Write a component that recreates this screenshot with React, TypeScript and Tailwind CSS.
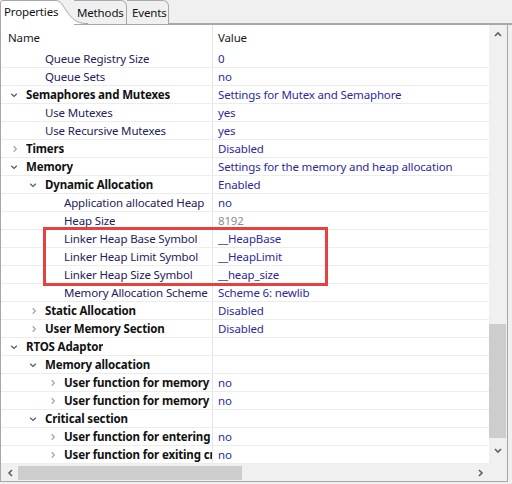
import React from 'react'

type Row = {
  level: number
  kind: 'leaf' | 'open' | 'closed'
  name: string
  value?: string
  muted?: boolean
}

const ROWS: Row[] = [
  { level: 1, kind: 'leaf', name: 'Queue Registry Size', value: '0' },
  { level: 1, kind: 'leaf', name: 'Queue Sets', value: 'no' },
  { level: 0, kind: 'open', name: 'Semaphores and Mutexes', value: 'Settings for Mutex and Semaphore' },
  { level: 1, kind: 'leaf', name: 'Use Mutexes', value: 'yes' },
  { level: 1, kind: 'leaf', name: 'Use Recursive Mutexes', value: 'yes' },
  { level: 0, kind: 'closed', name: 'Timers', value: 'Disabled' },
  { level: 0, kind: 'open', name: 'Memory', value: 'Settings for the memory and heap allocation' },
  { level: 1, kind: 'open', name: 'Dynamic Allocation', value: 'Enabled' },
  { level: 2, kind: 'leaf', name: 'Application allocated Heap', value: 'no' },
  { level: 2, kind: 'leaf', name: 'Heap Size', value: '8192', muted: true },
  { level: 2, kind: 'leaf', name: 'Linker Heap Base Symbol', value: '__HeapBase' },
  { level: 2, kind: 'leaf', name: 'Linker Heap Limit Symbol', value: '__HeapLimit' },
  { level: 2, kind: 'leaf', name: 'Linker Heap Size Symbol', value: '__heap_size' },
  { level: 2, kind: 'leaf', name: 'Memory Allocation Scheme', value: 'Scheme 6: newlib' },
  { level: 1, kind: 'closed', name: 'Static Allocation', value: 'Disabled' },
  { level: 1, kind: 'closed', name: 'User Memory Section', value: 'Disabled' },
  { level: 0, kind: 'open', name: 'RTOS Adaptor' },
  { level: 1, kind: 'open', name: 'Memory allocation' },
  { level: 2, kind: 'closed', name: 'User function for memory allocation', value: 'no' },
  { level: 2, kind: 'closed', name: 'User function for memory deallocation', value: 'no' },
  { level: 1, kind: 'open', name: 'Critical section' },
  { level: 2, kind: 'closed', name: 'User function for entering critical section', value: 'no' },
  { level: 2, kind: 'closed', name: 'User function for exiting critical section', value: 'no' },
]

const INDENT = ['pl-[6px]', 'pl-[25px]', 'pl-[44px]']

function Chevron({ open }: { open: boolean }) {
  return open ? (
    <svg width="8" height="8" viewBox="0 0 8 8" className="ml-[3px]">
      <path d="M1.2 2.8 L4 5.4 L6.8 2.8" fill="none" stroke="#5a5a5a" strokeWidth="1.3" />
    </svg>
  ) : (
    <svg width="8" height="8" viewBox="0 0 8 8" className="ml-[4px]">
      <path d="M2.7 1.2 L5.3 4 L2.7 6.8" fill="none" stroke="#a8a8a8" strokeWidth="1.3" />
    </svg>
  )
}

function TreeRow({ row }: { row: Row }) {
  const bold = row.kind !== 'leaf'
  return (
    <div className="flex h-[18px] border-b border-[#ececec]">
      <div className={`w-[211px] shrink-0 flex items-center overflow-hidden whitespace-nowrap ${INDENT[row.level]}`}>
        {row.kind === 'leaf' ? (
          <span className="w-[19px] shrink-0" />
        ) : (
          <span className="w-[19px] shrink-0 flex items-center">
            <Chevron open={row.kind === 'open'} />
          </span>
        )}
        <span className={`min-w-0 overflow-hidden leading-[17px] ${bold ? 'font-bold text-[#111]' : 'text-[#22225a]'}`}>
          {row.name}
        </span>
      </div>
      <div className="flex-1 border-l border-[#e4e4e4] pl-[5px] flex items-center whitespace-nowrap overflow-hidden">
        <span className={row.muted ? 'text-[#8c8c8c]' : 'text-[#2a2a9c]'}>{row.value}</span>
      </div>
    </div>
  )
}

export default function App() {
  return (
    <div className="w-[512px] h-[484px] bg-[#f0f0f0] overflow-hidden text-[11.5px] tracking-[-0.15px] leading-none font-['Noto_Sans',sans-serif] relative">
      {/* tab strip */}
      <div className="relative flex h-[25px]">
        <svg className="absolute left-0 top-0" width="88" height="25" viewBox="0 0 88 25">
          <path d="M0.5 25 V3 Q0.5 0.5 3 0.5 H56 C65 0.5 67 23.5 86 23.5 V25 Z" fill="#fff" />
          <path d="M0.5 25 V3 Q0.5 0.5 3 0.5 H56 C65 0.5 67 23.5 86 23.5 H88" fill="none" stroke="#a8a8a8" strokeWidth="1" />
        </svg>
        <div className="relative w-[74px] pl-[4px] pt-[6px] text-[#111]">Properties</div>
        <div className="relative w-[53px] border-t border-r border-b border-[#a8a8a8] rounded-tr-[6px] pt-[6px] pl-[3px] text-[#111]">
          Methods
        </div>
        <div className="relative w-[42px] border-t border-r border-b border-[#a8a8a8] rounded-tr-[6px] pt-[6px] pl-[5px] text-[#111]">
          Events
        </div>
        <div className="flex-1 border-b-2 border-[#a8a8a8]" />
      </div>

      {/* panel */}
      <div className="w-[508px] border-l border-r border-b border-[#a8a8a8] flex flex-col">
        <div className="flex h-[439px]">
          <div className="w-[488px] bg-white overflow-hidden">
            <div className="flex h-[25px]">
              <div className="w-[211px] shrink-0 pl-[7px] flex items-center text-[#1a1a1a]">Name</div>
              <div className="flex-1 border-l border-[#e4e4e4] pl-[5px] flex items-center text-[#1a1a1a]">Value</div>
            </div>
            {ROWS.map((r, i) => (
              <TreeRow key={i} row={r} />
            ))}
          </div>
          <div className="w-[17px] bg-[#f0f0f0] flex flex-col items-center">
            <div className="h-[17px] flex items-center justify-center">
              <svg width="8" height="6" viewBox="0 0 8 6">
                <path d="M1 5 L4 2 L7 5" fill="none" stroke="#606060" strokeWidth="1.6" />
              </svg>
            </div>
            <div className="h-[282px]" />
            <div className="w-[17px] h-[114px] bg-[#cdcdcd]" />
            <div className="flex-1 flex items-center justify-center">
              <svg width="8" height="6" viewBox="0 0 8 6">
                <path d="M1 1 L4 4 L7 1" fill="none" stroke="#606060" strokeWidth="1.6" />
              </svg>
            </div>
          </div>
        </div>
        <div className="flex h-[17px]">
          <div className="w-[488px] flex items-center bg-[#f0f0f0]">
            <div className="w-[17px] flex items-center justify-center">
              <svg width="6" height="8" viewBox="0 0 6 8">
                <path d="M5 1 L2 4 L5 7" fill="none" stroke="#606060" strokeWidth="1.6" />
              </svg>
            </div>
            <div className="w-[224px] h-[14px] bg-[#cdcdcd]" />
            <div className="flex-1" />
            <div className="w-[17px] flex items-center justify-center">
              <svg width="6" height="8" viewBox="0 0 6 8">
                <path d="M1 1 L4 4 L1 7" fill="none" stroke="#606060" strokeWidth="1.6" />
              </svg>
            </div>
          </div>
          <div className="flex-1 bg-[#f0f0f0]" />
        </div>
      </div>

      {/* annotation box */}
      <div className="absolute left-[43px] top-[227px] w-[285px] h-[59px] border-[3px] border-[#e5413f]" />
    </div>
  )
}
